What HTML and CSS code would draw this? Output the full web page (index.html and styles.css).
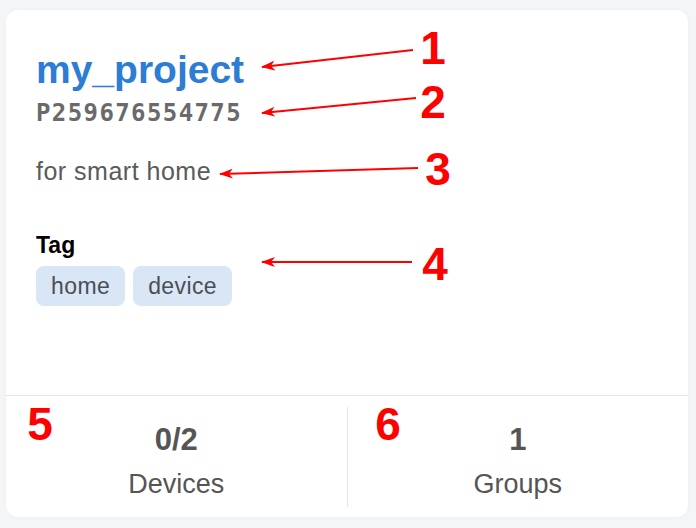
FILE: index.html
```html
<!DOCTYPE html>
<html>
<head>
<meta charset="utf-8">
<link rel="stylesheet" href="styles.css">
</head>
<body>
<div class="page">
  <div class="card">
    <div class="info">
      <div class="title">my_project</div>
      <div class="pid">P259676554775</div>
      <div class="desc">for smart home</div>
      <div class="tag-label">Tag</div>
      <div class="tags">
        <span class="tag">home</span>
        <span class="tag">device</span>
      </div>
    </div>
    <div class="stats">
      <div class="stat">
        <div class="stat-num">0/2</div>
        <div class="stat-label">Devices</div>
      </div>
      <div class="stat stat-sep">
        <div class="stat-num">1</div>
        <div class="stat-label">Groups</div>
      </div>
    </div>
  </div>
  <svg class="notes" width="696" height="528" viewBox="0 0 696 528">
    <defs>
      <marker id="ah" markerWidth="14" markerHeight="10" refX="13" refY="5" orient="auto" markerUnits="userSpaceOnUse">
        <path d="M0 0 L14 5 L0 10 L4 5 Z" fill="#f00"/>
      </marker>
    </defs>
    <g stroke="#f00" stroke-width="2" fill="none">
      <line x1="413" y1="50" x2="262" y2="67" marker-end="url(#ah)"/>
      <line x1="416" y1="98" x2="262" y2="113" marker-end="url(#ah)"/>
      <line x1="418" y1="168" x2="220" y2="174" marker-end="url(#ah)"/>
      <line x1="412" y1="262" x2="262" y2="262" marker-end="url(#ah)"/>
    </g>
    <g class="num">
      <text x="433" y="64">1</text>
      <text x="433" y="118">2</text>
      <text x="438" y="185">3</text>
      <text x="435" y="280">4</text>
      <text x="40" y="440">5</text>
      <text x="388" y="440">6</text>
    </g>
  </svg>
</div>
</body>
</html>
```
FILE: styles.css
```css
html, body {
  margin: 0;
  padding: 0;
  background: #f4f5f7;
}
.page {
  position: relative;
  width: 696px;
  height: 528px;
  padding: 10px 8px 11px 6px;
  box-sizing: border-box;
  font-family: "Liberation Sans", Arial, sans-serif;
}
.card {
  background: #fff;
  border-radius: 12px;
  height: 507px;
  display: flex;
  flex-direction: column;
  box-shadow: 0 0 4px rgba(0,0,0,0.03);
}
.info {
  height: 386px;
  box-sizing: border-box;
  padding: 38px 30px 0 30px;
  border-bottom: 1px solid #e4e4e4;
}
.title {
  font-size: 39px;
  line-height: 44px;
  font-weight: bold;
  color: #2d7dd4;
}
.pid {
  margin-top: 6px;
  font-family: "DejaVu Sans Mono", monospace;
  font-weight: bold;
  font-size: 24px;
  line-height: 30px;
  letter-spacing: 1.4px;
  color: #6a6a6a;
}
.desc {
  margin-top: 27px;
  font-size: 25px;
  line-height: 32px;
  color: #5a5a5a;
  letter-spacing: 0.5px;
}
.tag-label {
  margin-top: 44px;
  font-size: 23px;
  line-height: 28px;
  font-weight: bold;
  color: #000;
}
.tags {
  margin-top: 7px;
  display: flex;
  gap: 8px;
}
.tag {
  background: #d9e6f5;
  border-radius: 8px;
  height: 40px;
  line-height: 40px;
  padding: 0 15px;
  font-size: 23px;
  letter-spacing: 0.4px;
  color: #4a4f56;
}
.stats {
  flex: 1;
  display: flex;
  padding: 11px 0 10px;
}
.stat {
  flex: 1;
  text-align: center;
  padding-top: 15px;
}
.stat-sep {
  border-left: 1px solid #e4e4e4;
}
.stat-num {
  font-size: 31px;
  line-height: 36px;
  font-weight: bold;
  color: #555;
}
.stat-label {
  margin-top: 9px;
  font-size: 27px;
  line-height: 34px;
  color: #555;
}
.notes {
  position: absolute;
  left: 0;
  top: 0;
}
.num text {
  font-family: "Liberation Sans", Arial, sans-serif;
  font-weight: bold;
  font-size: 46px;
  fill: #f00;
  text-anchor: middle;
}
```
